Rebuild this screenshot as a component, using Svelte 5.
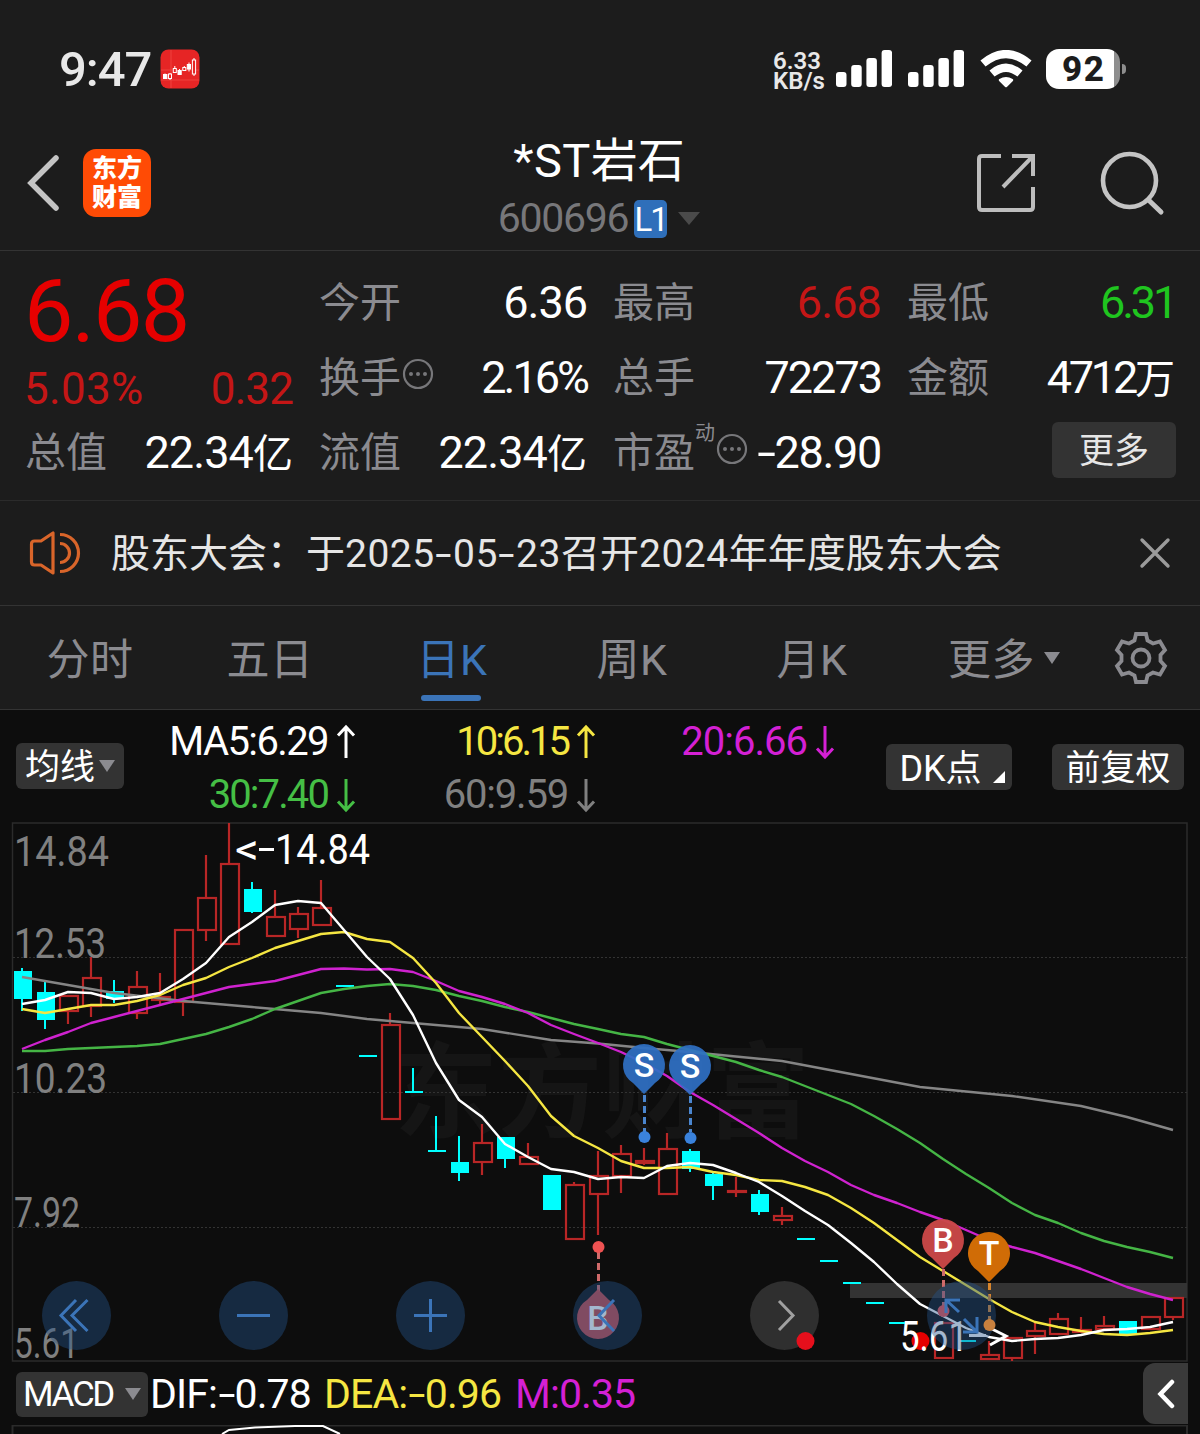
<script>
  // Candles are spaced evenly along the chart.
  const STEP = 23.02;
  const X0 = 22;
  const px = (i) => Math.round(X0 + i * STEP);

  // [index, kind, bodyTop, bodyBottom, wickTop, wickBottom]
  const candles = [
    [0, 'd', 971, 999, 968, 1011], [1, 'd', 992, 1020, 982, 1029], [2, 'u', 996, 1011, 995, 1024],
    [3, 'u', 978, 1006, 957, 1017], [4, 'd', 991, 999, 980, 1003], [5, 'u', 987, 1013, 971, 1019],
    [6, 'u', 997, 1000, 973, 1006], [7, 'u', 930, 1002, 930, 1016], [8, 'u', 898, 930, 855, 941],
    [9, 'u', 864, 944, 823, 944], [10, 'd', 889, 912, 882, 913], [11, 'u', 917, 936, 890, 936],
    [12, 'u', 914, 929, 907, 938], [13, 'u', 908, 925, 880, 925], [14, 'd', 985, 987, 985, 987],
    [15, 'd', 1055, 1057, 1055, 1057], [16, 'u', 1025, 1119, 1013, 1119], [17, 'd', 1091, 1093, 1068, 1093],
    [18, 'd', 1150, 1152, 1116, 1152], [19, 'd', 1162, 1173, 1136, 1181], [20, 'u', 1143, 1162, 1124, 1175],
    [21, 'd', 1137, 1159, 1137, 1168], [22, 'u', 1157, 1164, 1143, 1165], [23, 'd', 1175, 1210, 1175, 1210],
    [24, 'u', 1185, 1239, 1182, 1239], [25, 'u', 1176, 1194, 1151, 1235], [26, 'u', 1154, 1176, 1145, 1193],
    [27, 'u', 1161, 1163, 1148, 1165], [28, 'u', 1149, 1194, 1133, 1194], [29, 'd', 1151, 1169, 1149, 1172],
    [30, 'd', 1174, 1186, 1172, 1200], [31, 'u', 1191, 1192, 1177, 1197], [32, 'd', 1194, 1212, 1190, 1215],
    [33, 'u', 1216, 1220, 1207, 1225], [34, 'd', 1238, 1240, 1238, 1240], [35, 'd', 1260, 1262, 1260, 1262],
    [36, 'd', 1282, 1284, 1282, 1284], [37, 'd', 1302, 1304, 1302, 1304], [38, 'd', 1322, 1324, 1322, 1324],
    [40, 'u', 1323, 1358, 1323, 1358], [41, 'd', 1340, 1342, 1340, 1342], [42, 'u', 1355, 1359, 1341, 1359],
    [43, 'u', 1338, 1358, 1338, 1361], [44, 'u', 1331, 1336, 1322, 1354], [45, 'u', 1319, 1334, 1313, 1334],
    [46, 'u', 1330, 1332, 1317, 1332], [47, 'u', 1326, 1329, 1316, 1330], [48, 'd', 1321, 1334, 1321, 1334],
    [49, 'u', 1317, 1329, 1317, 1329], [50, 'u', 1298, 1317, 1298, 1320]
  ];

  const averages = [
    { name: 'ma60', pts: [[0, 977], [2, 985], [4, 993], [7, 1001], [10, 1007], [13, 1013], [15, 1019], [17, 1023], [20, 1029], [23, 1040], [25, 1043.5], [27, 1048], [29, 1052], [33, 1061], [36, 1074], [39, 1087], [43, 1096], [46, 1106], [48, 1117], [50, 1130]] },
    { name: 'ma30', pts: [1051, 1051, 1049, 1048, 1047, 1046, 1044, 1039, 1034, 1027, 1019, 1009, 1001, 993, 989, 986, 984, 986, 990, 996, 1001, 1007, 1012, 1018, 1024, 1029, 1034, 1037, 1044, 1050, 1056, 1062, 1070, 1077, 1086, 1095, 1104, 1116, 1129, 1143, 1159, 1174, 1188, 1203, 1215, 1223, 1233, 1241, 1247, 1252, 1258].map((y, i) => [i, y]) },
    { name: 'ma20', pts: [1049, 1040, 1032, 1023, 1017, 1011, 1005, 999, 993, 987, 984, 981, 975, 969, 968.5, 969.5, 969, 972, 981, 991, 997, 1004, 1013, 1025, 1034, 1043, 1052, 1063, 1076, 1092, 1105, 1119, 1133, 1148, 1161, 1172, 1185, 1195, 1203, 1212, 1220, 1230, 1240, 1247, 1253, 1261, 1269, 1278, 1287, 1294, 1300].map((y, i) => [i, y]) },
    { name: 'ma10', pts: [1009, 1013, 1009, 1005, 1005, 1001, 995, 985, 978, 967, 958, 948, 941, 934, 932, 939, 942, 958, 983, 1013, 1037, 1061, 1086, 1116, 1136, 1148, 1161, 1168, 1168, 1167, 1172, 1175, 1180, 1181, 1187, 1195, 1208, 1223, 1240, 1257, 1271, 1285, 1299, 1312, 1322, 1327, 1331, 1334, 1335, 1333, 1330].map((y, i) => [i, y]) },
    { name: 'ma5', pts: [1004, 1000, 992, 993, 999, 997, 993, 979, 963, 937, 922, 905, 901, 903, 930, 957, 979, 1015, 1063, 1100, 1117, 1144, 1157, 1169, 1172, 1179, 1177, 1178, 1166, 1163, 1165, 1173, 1182, 1196, 1211, 1225, 1243, 1262, 1284, 1304, 1316, 1328, 1337, 1341, 1339, 1338, 1335, 1330, 1329, 1327, 1322].map((y, i) => [i, y]) }
  ].map((a) => ({ name: a.name, points: a.pts.map(([i, y]) => `${px(i)},${y}`).join(' ') }));

  // [label, baseline, width]
  const scale = [
    ['14.84', 866, 95], ['12.53', 958, 92], ['10.23', 1093, 93], ['7.92', 1227, 66], ['5.61', 1358, 65]
  ];

  // `track` is the letter spacing of the figure
  const stats = [
    { label: '今开', value: '6.36', track: -1 },
    { label: '最高', value: '6.68', tone: 'up', track: -0.9 },
    { label: '最低', value: '6.31', tone: 'down', track: -3.2 },
    { label: '换手', value: '2.16%', track: -3, info: true },
    { label: '总手', value: '72273', track: -2 },
    { label: '金额', value: '4712', unit: '万', track: -3.2 },
    { label: '总值', value: '22.34', unit: '亿', track: -0.9 },
    { label: '流值', value: '22.34', unit: '亿', track: -0.9 },
    { label: '市盈', value: '-28.90', track: -1.3, info: true, sup: '动' }
  ];
  const tabs = ['分时', '五日', '日K', '周K', '月K'];
  const mas = [
    { text: 'MA5:6.29', up: true, tone: 'c-white', track: -1.6 },
    { text: '10:6.15', up: true, tone: 'c-yellow', track: -3 },
    { text: '20:6.66', up: false, tone: 'c-magenta', track: -1 },
    { text: '30:7.40', up: false, tone: 'c-green', track: -1.9 },
    { text: '60:9.59', up: false, tone: 'c-gray', track: -1.2 }
  ];
</script>

{#snippet num(text)}{#each text.split('') as ch}{#if ch === '-'}<span class="dash">-</span>{:else}{ch}{/if}{/each}{/snippet}

{#snippet signal()}
  <svg class="signal" viewBox="0 0 56 38" width="56" height="38">
    <rect x="0" y="22" width="10.5" height="15" rx="3" />
    <rect x="15.2" y="15" width="10.5" height="22" rx="3" />
    <rect x="30.4" y="8" width="10.5" height="29" rx="3" />
    <rect x="45.6" y="0" width="10.5" height="37" rx="3" />
  </svg>
{/snippet}

{#snippet pin(x, y, letter, tone, flip)}
  <g class="pin {tone}">
    {#if flip}
      <path d="M{x} {y - 29} L{x + 11} {y - 18} A21 21 0 1 1 {x - 11} {y - 18} Z" />
    {:else}
      <path d="M{x} {y + 29} L{x - 11} {y + 18} A21 21 0 1 1 {x + 11} {y + 18} Z" />
    {/if}
    <text {x} y={y + 12} text-anchor="middle">{letter}</text>
  </g>
{/snippet}

<div class="screen">
  <div class="status">
    <span class="clock">9:47</span>
    <svg class="badge" viewBox="0 0 40 40" width="40" height="40">
      <rect x="0.5" y="0.5" width="39" height="39" rx="8" fill="#e62525" />
      <path d="M11 1v38M1 21h38M1 31h38" stroke="#f04a45" stroke-width="0.8" />
      <g fill="none" stroke="#fff" stroke-width="1">
        <path d="M5 24.5v3M10 24v7M14.800 17v3M19.500 20v3M24.300 17v2M29 13.500v9M34 9v3M34 25v2" />
        <rect x="3.500" y="25.500" width="3.400" height="4" fill="#fff" />
        <rect x="8.500" y="25" width="3" height="4.500" fill="#e62525" />
        <rect x="13.300" y="19.500" width="3" height="4" fill="#e62525" />
        <rect x="18" y="21.500" width="3.200" height="4" fill="#fff" />
        <rect x="22.800" y="18.500" width="3" height="3" fill="#e62525" />
        <rect x="27.300" y="15.500" width="3.200" height="4.500" fill="#fff" />
        <rect x="32.400" y="11" width="3.200" height="14" fill="#e62525" />
      </g>
    </svg>
    <div class="status-right">
      <div class="speed"><span>6.33</span><span>KB/s</span></div>
      {@render signal()}
      {@render signal()}
      <svg class="wifi" viewBox="0 0 52 38" width="52" height="38">
        <g fill="none" stroke="#fff" stroke-width="8">
          <path d="M3 13.500Q26 -5.500 49 13.500" />
          <path d="M12 23.500Q26 12 40 23.500" />
        </g>
        <path d="M20 30Q26 26.500 32 30L26 36Z" fill="#fff" stroke="#fff" stroke-width="2.500" stroke-linejoin="round" />
      </svg>
      <div class="battery"><span>92</span></div>
      <i class="nub"></i>
    </div>
  </div>

  <header class="nav">
    <svg class="back" viewBox="0 0 34 58" width="34" height="58">
      <path d="M30 4 5 29 30 54" fill="none" stroke="#c4c4c4" stroke-width="5.500" stroke-linecap="round" stroke-linejoin="miter" />
    </svg>
    <div class="logo"><span>东方</span><span>财富</span></div>
    <div class="heading">
      <h1><span class="latin">*ST</span>岩石</h1>
      <p><span class="code">600696</span><b>L1</b><i class="tri"></i></p>
    </div>
    <svg class="share" viewBox="0 0 60 60" width="60" height="60">
      <path d="M25 3H6Q3 3 3 6V54Q3 57 6 57H54Q57 57 57 54V34M36 3H57V23M57 3 27 34" fill="none" stroke="#bdbdbd" stroke-width="4" />
    </svg>
    <svg class="search" viewBox="0 0 66 66" width="66" height="66">
      <circle cx="30.500" cy="30.500" r="26.500" fill="none" stroke="#c4c4c4" stroke-width="4.600" />
      <path d="M49.500 50 62 62" stroke="#c4c4c4" stroke-width="5" stroke-linecap="round" />
    </svg>
  </header>

  <section class="quote">
    <div class="last">
      <strong>6.68</strong>
      <div class="change"><span class="pct">5.03%</span><span>0.32</span></div>
    </div>
    {#each stats as s}
      <div class="stat">
        <span class="label">{s.label}</span>
        {#if s.sup}<sup>{s.sup}</sup>{/if}
        {#if s.info}
          <svg class="info" viewBox="0 0 32 32" width="32" height="32">
            <circle cx="16" cy="16" r="14" fill="none" stroke="#77777a" stroke-width="2.200" />
            <circle cx="9" cy="16" r="2" /><circle cx="16" cy="16" r="2" /><circle cx="23" cy="16" r="2" />
          </svg>
        {/if}
        <span class="value {s.tone ?? ''}" style:letter-spacing="{s.track}px">{@render num(s.value)}{#if s.unit}<span class="unit">{s.unit}</span>{/if}</span>
      </div>
    {/each}
    <button class="more">更多</button>
  </section>

  <section class="notice">
    <svg viewBox="0 0 54 46" width="54" height="46" fill="none" stroke="#d9652a" stroke-width="3.200">
      <path d="M3.500 14Q3.500 11 6.500 11H13L25 3V43L13 35H6.500Q3.500 35 3.500 32Z" stroke-linejoin="round" />
      <path d="M32 13.500A9.500 9.500 0 0 1 32 32.500M32 4.500A18.500 18.500 0 0 1 32 41.500" />
    </svg>
    <p>股东大会：于<span class="figs">{@render num('2025-05-23')}</span>召开<span class="figs">2024</span>年年度股东大会</p>
    <svg class="close" viewBox="0 0 32 32" width="32" height="32">
      <path d="M3 3 29 29M29 3 3 29" stroke="#9b9b9b" stroke-width="3.400" stroke-linecap="round" />
    </svg>
  </section>

  <nav class="tabs">
    {#each tabs as t}
      <span class="tab" class:active={t === '日K'} class:latin-end={t.endsWith('K')}>{t}</span>
    {/each}
    <span class="tab wide">更多<i class="tri"></i></span>
    <svg class="gear" viewBox="0 0 54 54" width="54" height="54">
      <path d="M22 3H32L33.500 9.500 39 12.500 46 10.500 51 19 46.500 24V30L51 35 46 43.500 39 41.500 33.500 44.500 32 51H22L20.500 44.500 15 41.500 8 43.500 3 35 7.500 30V24L3 19 8 10.500 15 12.500 20.500 9.500Z" fill="none" stroke="#8b8b90" stroke-width="3.800" />
      <circle cx="27" cy="27" r="8.500" fill="none" stroke="#8b8b90" stroke-width="3.800" />
    </svg>
  </nav>

  <section class="mabar">
    <button class="chip first"><span>均线</span><i class="tri"></i></button>
    <div class="mas">
      {#each mas as m}
        <div class="ma {m.tone}"><span style:letter-spacing="{m.track}px">{m.text}</span><svg viewBox="0 0 20 36" width="20" height="36">
          {#if m.up}
            <path d="M10 34V3M2 11.500 10 3 18 11.500" />
          {:else}
            <path d="M10 2V33M2 24.500 10 33 18 24.500" />
          {/if}
        </svg></div>
      {/each}
    </div>
    <button class="chip dk"><span>DK点</span><i class="corner"></i></button>
    <button class="chip fq"><span>前复权</span></button>
  </section>

  <svg class="chart" viewBox="0 820 1200 542" width="1200" height="542">
    <text class="watermark" x="394" y="1130" textLength="416">东方财富</text>
    <g class="grid">
      <path d="M12.500 1361V823H1187V1361Z" />
      <path class="dots" d="M13 957.500H1187M13 1092.500H1187M13 1227.500H1187" />
    </g>
    <rect x="850" y="1283" width="337" height="15" fill="#333" />
    <g class="scale">
      {#each scale as [label, y, width]}
        <text x="14" {y} textLength={width} lengthAdjust="spacingAndGlyphs">{label}</text>
      {/each}
    </g>
    {#each candles as [i, kind, top, bottom, high, low]}
      {#if kind === 'u'}
        <g class="up-candle">
          <path d="M{px(i)} {high}V{top}M{px(i)} {bottom}V{low}" />
          <rect x={px(i) - 8} y={top} width="18" height={bottom - top} />
        </g>
      {:else}
        <g class="down-candle">
          <rect x={px(i) - 1} y={high} width="2" height={low - high} />
          <rect x={px(i) - 8} y={top} width="18" height={bottom - top} />
        </g>
      {/if}
    {/each}
    {#each averages as a}
      <polyline class="avg {a.name}" points={a.points} />
    {/each}

    <path class="mark" d="M644.500 1095V1132M690.500 1096V1132" stroke="#4a86d0" />
    <circle cx="644.500" cy="1137" r="6" fill="#3a82dc" />
    <circle cx="690.500" cy="1138" r="6" fill="#3a82dc" />
    {@render pin(644, 1065, 'S', 'sell', false)}
    {@render pin(690, 1066, 'S', 'sell', false)}
    <path class="mark" d="M598.500 1252V1292M943.500 1269V1306" stroke="#cf6a6a" />
    <circle cx="598.500" cy="1247" r="6" fill="#ee5252" />
    <circle cx="943.500" cy="1311" r="6" fill="#ee5252" />
    <path class="mark" d="M989.500 1283V1320" stroke="#d9862d" />
    {@render pin(943, 1240, 'B', 'buy', false)}
    {@render pin(989, 1253, 'T', 'both', false)}
    {@render pin(598, 1318, 'B', 'buy', true)}

    <circle cx="920.500" cy="1341" r="9" fill="#e60000" />
    <text class="tag" x="235" y="864" textLength="24" lengthAdjust="spacingAndGlyphs">&lt;</text>
    <path class="pointer" d="M259 849.500H274" />
    <text class="tag" x="275" y="864" textLength="95" lengthAdjust="spacingAndGlyphs">14.84</text>
    <text class="tag" x="900" y="1351" textLength="68" lengthAdjust="spacingAndGlyphs">5.61</text>
    <path class="pointer" d="M969 1335.500H986M990 1328 1006 1336 990 1345" />

    <g class="ctl">
      <circle cx="76.500" cy="1315.500" r="34.500" />
      <path d="M76 1300 61 1315.500 76 1331M87.500 1300 72 1315.500 87.500 1331" />
      <circle cx="253.500" cy="1315.500" r="34.500" />
      <path d="M237 1315.500H270" />
      <circle cx="430.500" cy="1315.500" r="34.500" />
      <path d="M414 1315.500H447M430.500 1299V1332" />
      <circle cx="607.500" cy="1315.500" r="34.500" />
      <path d="M614 1300 599 1315.500 614 1331" />
      <circle cx="961.500" cy="1315.500" r="34.500" />
      <path d="M959 1312 946 1300M946 1313V1300H960M964 1319 977 1332M977 1317V1332H963" />
    </g>
    <circle cx="784.500" cy="1315.500" r="34.500" fill="#2f2f2f" />
    <path d="M779 1301 793 1315.500 779 1330" fill="none" stroke="#a0a0a0" stroke-width="3" />
    <circle cx="805.500" cy="1341" r="9" fill="#e60f1c" />
    <circle cx="989.500" cy="1325" r="6" fill="#c9813e" />
  </svg>

  <section class="macd">
    <button class="chip"><span>MACD</span><i class="tri"></i></button>
    <span class="dif">DIF:{@render num('-0.78')}</span>
    <span class="dea c-yellow">DEA:{@render num('-0.96')}</span>
    <span class="m c-magenta">M:0.35</span>
    <div class="drawer">
      <svg viewBox="0 0 18 30" width="18" height="30"><path d="M15 3 3.500 15 15 27" fill="none" stroke="#fff" stroke-width="4.500" stroke-linecap="round" /></svg>
    </div>
  </section>
  <svg class="subchart" viewBox="0 1425 1200 9" width="1200" height="9">
    <path d="M12.500 1434V1425.500H1187V1434" fill="none" stroke="#2b2b2b" stroke-width="2" />
    <path d="M222 1434 229 1430 255 1427.500 295 1426H323L340 1434" fill="none" stroke="#fff" stroke-width="2" />
  </svg>
</div>

<style>
  :global(body) { background: #0d0d0d; }
  .screen {
    width: 1200px; height: 1434px; overflow: hidden; background: #0d0d0d; color: #fff;
    font-family: Roboto, "Noto Sans CJK SC", sans-serif; font-size: 42px; line-height: 1;
  }
  .screen * { box-sizing: border-box; }
  svg { display: block; flex: none; }
  button { font: inherit; color: inherit; border: 0; padding: 0; margin: 0; }
  p, h1 { margin: 0; font-weight: 400; }
  .c-white { color: #fff; }
  .c-yellow { color: #f5e642; }
  .c-magenta { color: #d420d4; }
  .c-green { color: #45bf45; }
  .c-gray { color: #808080; }
  .dash { display: inline-block; transform: scaleX(1.5); margin: 0 3.500px; }
  .tri { width: 0; height: 0; border: solid transparent; border-width: 12px 8px 0; border-top-color: #8b8b90; flex: none; }

  .status { height: 116px; padding: 22px 74px 0 59px; display: flex; align-items: center; background: #1c1c1c; }
  .clock { font-size: 49px; font-weight: 500; letter-spacing: -1px; color: #e8e8e8; width: 101px; white-space: nowrap; }
  .status-right { margin-left: auto; display: flex; align-items: center; }
  .speed { width: 63px; display: flex; flex-direction: column; font-size: 24px; font-weight: 600; line-height: 20px; color: #e8e8e8; padding-top: 4px; }
  .signal { fill: #fff; margin-right: 16px; }
  .battery {
    width: 74px; height: 40px; border-radius: 13px; color: #1c1c1c; font-size: 35px; font-weight: 800; letter-spacing: 1.500px;
    background: linear-gradient(to right, #fff 68px, #8e8e8e 68px); display: flex; align-items: center; padding-left: 16px; margin-left: 14px;
  }
  .nub { width: 4px; height: 10px; margin-left: 2px; border-radius: 0 5px 5px 0; background: #8e8e8e; }

  .nav { height: 135px; display: flex; align-items: center; padding: 0 35px 0 26px; background: #1c1c1c; border-bottom: 1px solid #333; }
  .logo {
    margin-left: 23px; width: 68px; height: 68px; border-radius: 13px; background: #ff4b05; display: flex; flex-direction: column;
    align-items: center; justify-content: center; font-size: 25px; font-weight: 900; line-height: 29px;
  }
  .heading { width: 240px; margin-left: 328px; padding-top: 11px; display: flex; flex-direction: column; align-items: center; }
  .heading h1 { font-size: 47px; line-height: 60px; white-space: nowrap; }
  .heading .latin { letter-spacing: 0.500px; }
  .heading p { display: flex; align-items: center; height: 56px; color: #77777a; font-size: 41px; }
  .heading .code { letter-spacing: -1.300px; }
  .heading b { width: 33px; height: 38px; margin-left: 6px; border-radius: 5px; background: #2f6fba; color: #fff; font-size: 33px; font-weight: 400; letter-spacing: -2px; line-height: 39px; text-align: center; }
  .heading .tri { border-width: 13px 11px 0; border-top-color: #4a4a4a; margin-left: 11px; }
  .share { margin-left: 257px; }
  .search { margin-left: auto; }

  .quote {
    height: 250px; background: #1c1c1c; border-bottom: 1px solid #2b2b2b; padding: 14px 26px 0 25px;
    display: grid; grid-template-columns: repeat(4, 268px); column-gap: 26px; grid-template-rows: repeat(3, 75px);
  }
  .last { grid-row: 1 / 3; display: flex; flex-direction: column; color: #e60000; }
  .last strong { font-size: 88px; font-weight: 450; line-height: 92px; letter-spacing: -1.800px; margin: 0 0 5px -1px; }
  .change { display: flex; justify-content: space-between; font-size: 44px; line-height: 54px; letter-spacing: -0.900px; color: #c41616; margin-left: -1px; }
  .change .pct { letter-spacing: 0.300px; }
  .stat { display: flex; align-items: center; white-space: nowrap; }
  .label { font-size: 41px; color: #8b8b90; padding-top: 2px; }
  sup { font-size: 20px; color: #8b8b90; align-self: flex-start; margin-top: 8px; }
  .info { fill: #77777a; margin: 0 0 8px 1px; }
  .value { margin-left: auto; font-size: 45px; }
  .unit { font-size: 40px; letter-spacing: 0; }
  .up { color: #c41616; }
  .down { color: #1fc51f; }
  .more { justify-self: end; align-self: center; width: 124px; height: 56px; border-radius: 6px; background: #333; color: #e6e6e6; font-size: 35px; margin: -6px -1px 0 0; padding-top: 4px; }

  .notice { height: 105px; display: flex; align-items: center; padding: 0 29px 0 28px; background: #1c1c1c; border-bottom: 1px solid #333; }
  .notice p { font-size: 39px; margin-left: 29px; padding-top: 2px; color: #e6e6e6; white-space: nowrap; }
  .figs { letter-spacing: 0.500px; }
  .close { margin-left: auto; }

  .tabs { height: 104px; display: flex; background: #1c1c1c; border-bottom: 1px solid #333; color: #8b8b90; font-size: 43px; letter-spacing: 0.500px; }
  .tab { width: 180px; padding-top: 6px; display: flex; align-items: center; justify-content: center; position: relative; }
  .tab.latin-end { padding-left: 4px; }
  .tab.active { color: #3b74b8; }
  .tab.active::after { content: ''; position: absolute; left: 61px; bottom: 8px; width: 60px; height: 6px; border-radius: 3px; background: #3b74b8; }
  .tab.wide { width: 208px; }
  .tab .tri { margin: -5px 0 0 9px; }
  .gear { align-self: center; margin-left: 6px; }

  .chip { height: 46px; border-radius: 6px; background: #333; display: flex; align-items: center; justify-content: center; font-size: 35px; flex: none; }
  .mabar { height: 110px; display: flex; align-items: center; padding-left: 16px; }
  .mabar .chip { margin-top: 3px; }
  .mabar .chip span { padding-top: 4px; }
  .mabar .first { margin-top: 1px; width: 108px; }
  .mabar .tri { margin-left: 4px; }
  .mas { display: grid; grid-template-columns: 232px 240px 239px; grid-template-rows: 53px 53px; margin-top: 6px; font-size: 40px; }
  .ma { display: flex; align-items: center; justify-content: flex-end; }
  .ma svg { margin-left: 8px; fill: none; stroke: currentColor; stroke-width: 3; }
  .mabar .dk { width: 126px; margin-left: 51px; font-size: 36px; }
  .corner { width: 0; height: 0; border: solid transparent; border-width: 0 0 12px 12px; border-bottom-color: #fff; margin: 20px -6px 0 11px; }
  .fq { width: 132px; margin-left: 40px; }

  .grid path { fill: none; stroke: #2b2b2b; stroke-width: 1.500; }
  .grid .dots { stroke: #333; stroke-dasharray: 2 2; stroke-width: 1; }
  .watermark { font-size: 104px; font-weight: 700; fill: #151515; }
  .scale { font-size: 42px; fill: #808080; }
  .tag { font-size: 42px; fill: #fff; }
  .up-candle { fill: none; stroke: #b82626; stroke-width: 2.200; }
  .down-candle { fill: #00ffff; }
  .avg { fill: none; stroke-width: 2.400; stroke-linejoin: round; }
  .ma5 { stroke: #fff; }
  .ma10 { stroke: #f5e642; }
  .ma20 { stroke: #cf22cf; }
  .ma30 { stroke: #45b545; }
  .ma60 { stroke: #858585; }
  .mark { fill: none; stroke-width: 3; stroke-dasharray: 7 4; }
  .sell { fill: #2f70c4; fill-opacity: 0.93; }
  .buy { fill: #c94747; fill-opacity: 0.97; }
  .both { fill: #d06c06; }
  .pin text { font-size: 34px; font-weight: 500; fill: #fff; fill-opacity: 1; }
  .pointer { fill: none; stroke: #fff; stroke-width: 3; }
  .ctl circle { fill: #24538a; fill-opacity: 0.42; }
  .ctl path { fill: none; stroke: #3b74b8; stroke-width: 3; }

  .macd { height: 63px; display: flex; align-items: center; padding: 2px 12px 0 16px; white-space: nowrap; }
  .macd .chip { width: 132px; height: 45px; letter-spacing: -2.300px; margin-top: -1px; }
  .macd .tri { margin-left: 12px; }
  .macd > span { font-size: 41px; letter-spacing: -0.900px; }
  .dif { width: 174px; margin-left: 2px; }
  .dea { width: 191px; }
  .drawer { margin-left: auto; width: 45px; height: 61px; border-radius: 12px 0 0 12px; background: #3a3a3a; display: flex; align-items: center; justify-content: center; margin-top: -2px; }
</style>
